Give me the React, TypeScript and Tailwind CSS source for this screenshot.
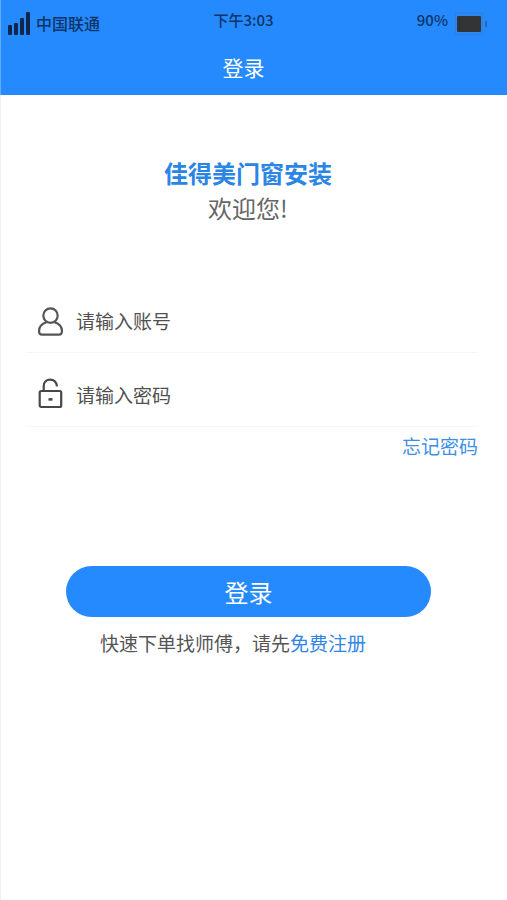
import React from "react";

function SignalIcon() {
  return (
    <svg width="23" height="23" viewBox="0 0 23 23" fill="#10264a" aria-hidden="true">
      <rect x="0" y="13" width="4" height="10" rx="1" />
      <rect x="6" y="11" width="4" height="12" rx="1" />
      <rect x="12" y="6" width="4" height="17" rx="1" />
      <rect x="18" y="0" width="4" height="23" rx="1" />
    </svg>
  );
}

function BatteryIcon() {
  return (
    <svg width="33" height="24" viewBox="0 0 33 24" aria-hidden="true">
      <rect x="1.5" y="2" width="27" height="21.5" rx="1" fill="none" stroke="#3c7cc8" />
      <rect x="3" y="5" width="24" height="16" rx="1" fill="#333436" />
      <rect x="31" y="10" width="2" height="6" fill="#2b66b0" />
    </svg>
  );
}

function UserIcon() {
  return (
    <svg width="28" height="32" viewBox="0 0 28 32" fill="none" stroke="#555" strokeWidth="2.2" aria-hidden="true">
      <circle cx="13.5" cy="10.6" r="7.2" />
      <path d="M9.5 17.2C5 18.6 2 22 2 26C2 28.6 2.8 29.6 5 29.6H22C24.2 29.6 25 28.6 25 26C25 22 22 18.6 17.5 17.2" />
    </svg>
  );
}

function LockIcon() {
  return (
    <svg width="28" height="34" viewBox="0 0 28 34" fill="none" stroke="#484848" strokeWidth="2.2" aria-hidden="true">
      <rect x="2.7" y="13" width="21.5" height="16" rx="1.5" />
      <path d="M6.7 13V8.2C6.7 4.2 9.5 1.6 13.2 1.6C16.8 1.6 19.4 3.8 20 8.4" />
      <path d="M11.5 21.4H15.5" strokeWidth="2.6" />
    </svg>
  );
}

type FieldProps = {
  id: string;
  type: string;
  label: string;
  icon: React.ReactNode;
};

function Field({ id, type, label, icon }: FieldProps) {
  return (
    <div className="flex h-[74px] items-center gap-[11px] border-b border-[#f6f6f6] pt-[10px] pl-[11px]">
      <label htmlFor={id} aria-label={label} className="shrink-0">
        {icon}
      </label>
      <input
        id={id}
        type={type}
        placeholder={label}
        className="h-8 min-w-0 flex-1 bg-transparent text-[19px] text-[#444] outline-none placeholder:text-[#505050] placeholder:opacity-100"
      />
    </div>
  );
}

export default function App() {
  return (
    <div className="flex min-h-screen flex-col bg-white font-['Noto_Sans_CJK_SC',sans-serif] text-[#555]">
      <header className="h-[95px] border-l border-[#62abfb] bg-[#248afe] pt-[7px] pr-5 pl-[7px]">
        <div className="flex h-8 items-center text-[15px] font-medium text-[#103468]">
          <div className="flex flex-1 items-center gap-[5px]">
            <SignalIcon />
            <span className="text-[16px]">中国联通</span>
          </div>
          <time className="pr-2 pb-[6px]">下午3:03</time>
          <div className="flex flex-1 items-center justify-end gap-[6px]">
            <span className="pb-[6px]">90%</span>
            <BatteryIcon />
          </div>
        </div>
        <h1 className="mt-3 pr-2 text-center text-[21px] leading-8 text-white">登录</h1>
      </header>

      <main className="flex-1 border-l border-[#f0f0f0] pr-[29px] pl-[25px]">
        <div className="pt-[60px] pr-2 text-center text-[24px] leading-[35px]">
          <h2 className="font-bold text-[#2b85e4]">佳得美门窗安装</h2>
          <p className="text-[#666]">欢迎您!</p>
        </div>

        <form onSubmit={(e) => e.preventDefault()}>
          <div className="pt-[54px]">
            <Field id="account" type="text" label="请输入账号" icon={<UserIcon />} />
            <Field id="password" type="password" label="请输入密码" icon={<LockIcon />} />
          </div>
          <div className="flex justify-end pt-[3px]">
            <a href="#forgot" className="text-[19px] leading-8 text-[#3d8fe6]">
              忘记密码
            </a>
          </div>
          <div className="pt-[104px] pr-[47px] pl-10">
            <button
              type="submit"
              className="h-[51px] w-full rounded-full bg-[#248afe] text-[24px] text-white"
            >
              登录
            </button>
          </div>
        </form>

        <p className="pt-[10px] pr-[38px] text-center text-[19px] leading-8 text-[#555]">
          快速下单找师傅，请先
          <a href="#register" className="text-[#2f86e8]">
            免费注册
          </a>
        </p>
      </main>
    </div>
  );
}
